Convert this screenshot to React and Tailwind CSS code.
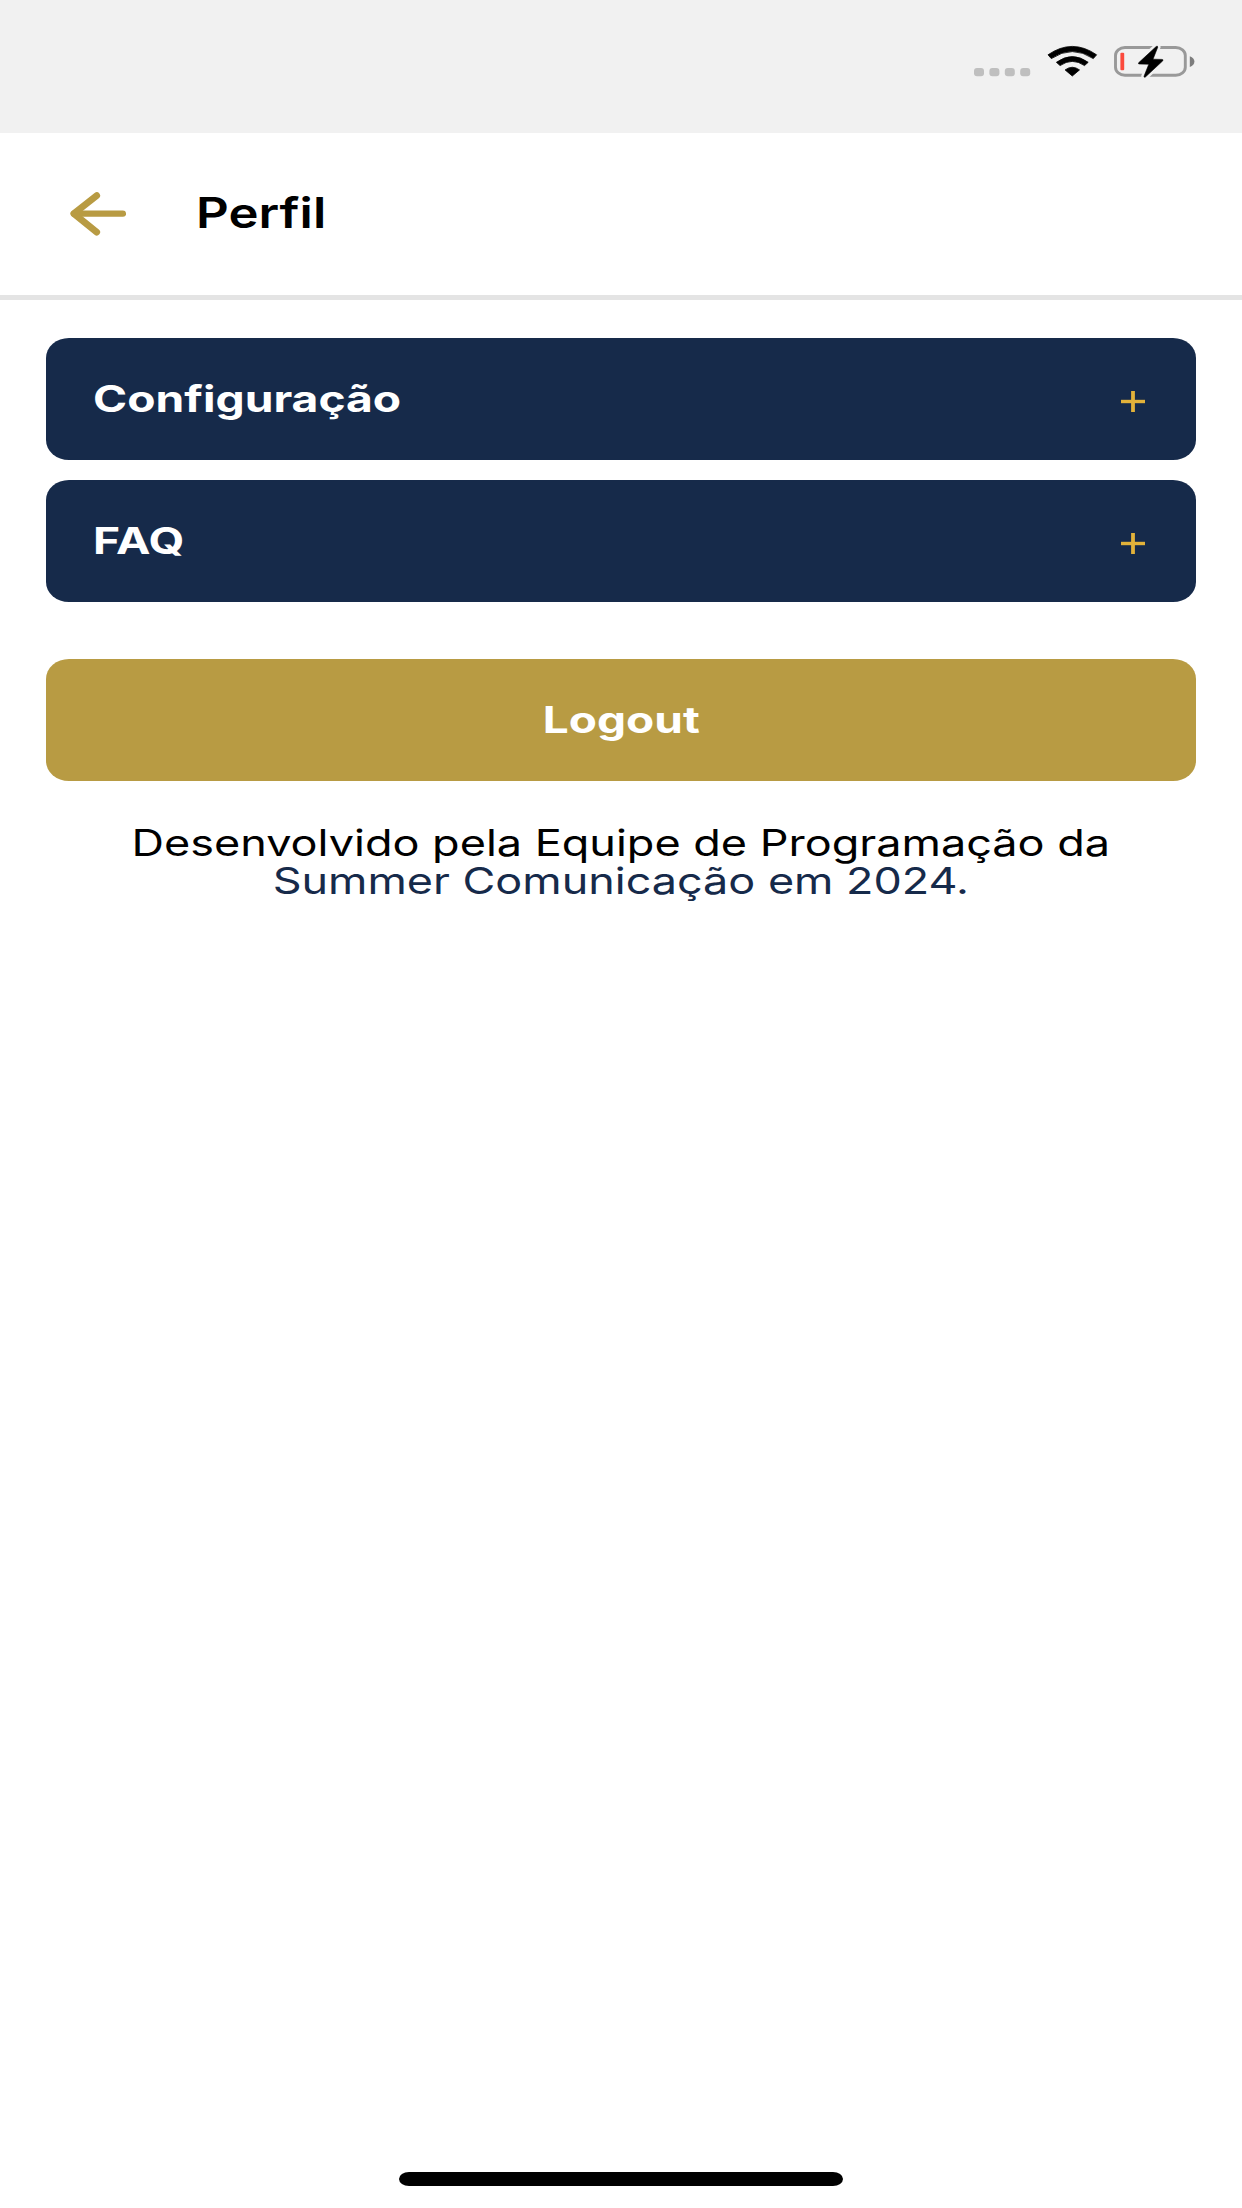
import { useState } from 'react';

const sections = [
  { id: 'config', title: 'Configuração' },
  { id: 'faq', title: 'FAQ' },
];

function StatusBar() {
  return (
    <div className="flex h-[133px] items-start justify-end bg-[#f1f1f1] pt-[45px] pr-[46px]">
      <svg className="mt-[22px] mr-[16px] h-[10px] w-[57px]" viewBox="0 0 57 10" fill="#bfbfbf">
        <rect x="0" y="1" width="10" height="8.2" rx="3" />
        <rect x="15.4" y="1" width="10" height="8.2" rx="3" />
        <rect x="30.8" y="1" width="10" height="8.2" rx="3" />
        <rect x="46.2" y="1" width="10" height="8.2" rx="3" />
      </svg>

      <svg className="mr-[15px] h-8 w-[51px]" viewBox="0 0 51 32" fill="#000" stroke="#000" strokeWidth="0.8" strokeLinejoin="round">
        <path d="M1 9.8Q25.3-7 49.6 9.8L46.3 13.6Q25.3-.4 4.3 13.6Z" />
        <path d="M9.4 17.3Q25.3 5.8 41.2 17.3L37.5 20.6Q25.3 12.2 13.1 20.6Z" />
        <path d="M18.1 24.9Q25.3 19.6 32.5 24.9L25.3 31Z" />
      </svg>

      <svg className="h-[34px] w-[83px]" viewBox="0 0 83 34">
        <rect x="2.5" y="2.5" width="69.8" height="27.8" rx="9.5" ry="8" fill="none" stroke="#999" strokeWidth="2.9" />
        <path d="M76.8 11.2Q81.4 12.8 81.4 16.6T76.8 22Z" fill="#7d7d7d" />
        <rect x="7.4" y="7.8" width="3.8" height="17.5" rx="1" fill="#fb4a3d" />
        <path
          d="M43.2 1.5L25.6 17.8Q24.9 19 26.4 19L35.8 19.2L31 31.3Q31 32.8 32.4 32L49.8 15.8Q50.6 14.5 49 14.4L40 14.2L44.8 2Q44.6.6 43.2 1.5Z"
          fill="none"
          stroke="#f1f1f1"
          strokeWidth="5.5"
        />
        <path
          d="M43.2 1.5L25.6 17.8Q24.9 19 26.4 19L35.8 19.2L31 31.3Q31 32.8 32.4 32L49.8 15.8Q50.6 14.5 49 14.4L40 14.2L44.8 2Q44.6.6 43.2 1.5Z"
          fill="#000"
          stroke="#000"
          strokeWidth="0.6"
          strokeLinejoin="round"
        />
      </svg>
    </div>
  );
}

function Header() {
  return (
    <header className="flex h-[167px] items-center border-b-[5px] border-[#e4e4e4] bg-white pl-[70px]">
      <button type="button" aria-label="Voltar">
        <svg className="h-[44px] w-[56px]" viewBox="0 0 56 44" fill="none" stroke="#b89b43" strokeLinecap="round" strokeLinejoin="round">
          <path d="M4 21.7H53" strokeWidth="6.2" />
          <path d="M26.7 3.6L3.8 21.7L26.7 40.2" strokeWidth="6.8" />
        </svg>
      </button>
      <h1 className="mb-[2px] ml-[70px] origin-left scale-x-[1.21] text-[42px] leading-none font-semibold text-black">
        Perfil
      </h1>
    </header>
  );
}

function Section({ title, open, onToggle }) {
  return (
    <button
      type="button"
      onClick={onToggle}
      aria-expanded={open}
      className="flex h-[122px] w-full items-center justify-between rounded-[23px/20px] bg-[#162a4a] pr-[51px] pl-[47px]"
    >
      <span className="mt-[1px] origin-left scale-x-[1.265] text-[36.5px] leading-none font-bold text-white">{title}</span>
      <svg className="mt-[5px] h-[21px] w-[24px]" viewBox="0 0 24 21" stroke="#e2b23a">
        <path d="M0 10.5H24" strokeWidth="3.4" />
        {!open && <path d="M12 0V21" strokeWidth="3.8" />}
      </svg>
    </button>
  );
}

export default function App() {
  const [openId, setOpenId] = useState('');

  return (
    <div className="flex min-h-[2208px] flex-col bg-white font-['Inter',sans-serif]">
      <StatusBar />
      <Header />

      <main className="flex-1 px-[46px] pt-[38px]">
        <div className="flex flex-col gap-[20px]">
          {sections.map((s) => (
            <Section
              key={s.id}
              title={s.title}
              open={openId === s.id}
              onToggle={() => setOpenId(openId === s.id ? '' : s.id)}
            />
          ))}
        </div>

        <button
          type="button"
          className="mt-[57px] flex h-[122px] w-full items-center justify-center rounded-[23px/20px] bg-[#b89b43]"
        >
          <span className="scale-x-[1.26] text-[36.5px] leading-none font-bold text-white">Logout</span>
        </button>

        <div className="mt-[43px] flex flex-col items-center text-[36.5px] leading-[38px]">
          <p className="scale-x-[1.233] whitespace-nowrap text-black">Desenvolvido pela Equipe de Programação da</p>
          <p className="scale-x-[1.231] whitespace-nowrap text-[#162a4a]">Summer Comunicação em 2024.</p>
        </div>
      </main>

      <div className="mx-auto mb-[22px] h-[14px] w-[444px] rounded-[10px/7px] bg-black" />
    </div>
  );
}
